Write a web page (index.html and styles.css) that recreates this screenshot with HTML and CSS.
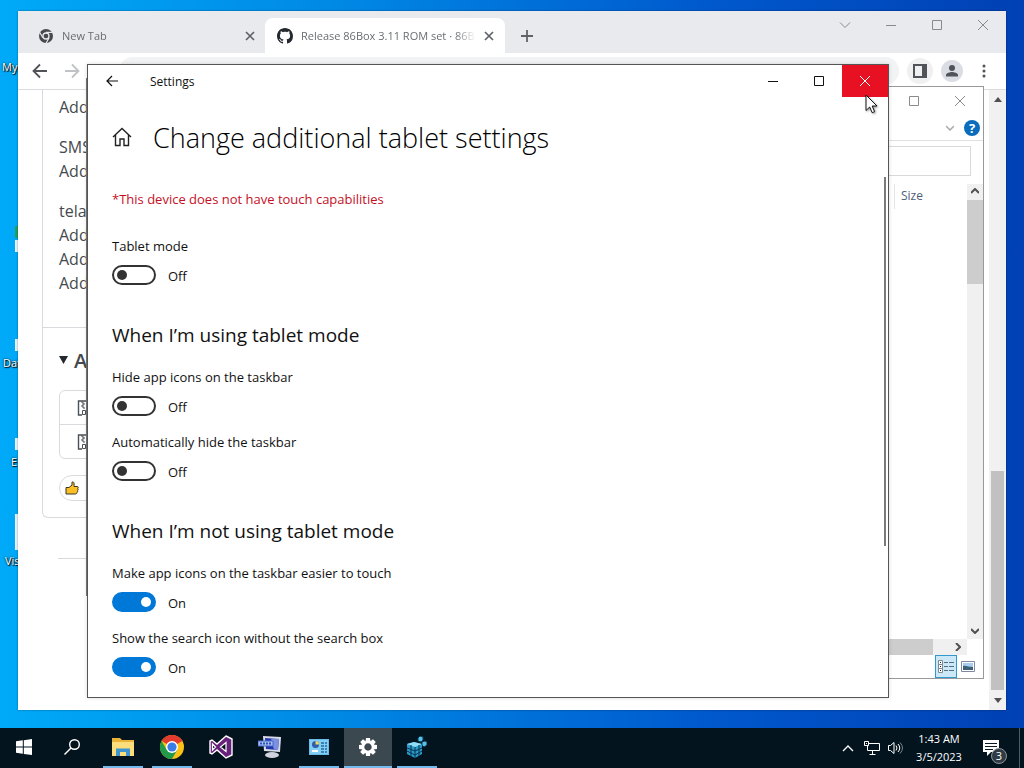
FILE: index.html
```html
<!DOCTYPE html>
<html lang="en">

<head>
    <meta charset="UTF-8">
    <meta name="viewport" content="width=device-width, initial-scale=1.0">
    <title>Settings</title>
    <link rel="stylesheet" href="styles.css">
</head>

<body>
    <main class="desktop">
        <div class="shortcut shortcut-my">My</div>
        <div class="shortcut-icon icon-green"></div>
        <div class="shortcut-icon icon-data"></div>
        <div class="shortcut shortcut-data">Dat</div>
        <div class="shortcut-icon icon-e"></div>
        <div class="shortcut shortcut-e">E</div>
        <div class="shortcut-icon icon-vis"></div>
        <div class="shortcut shortcut-vis">Vis</div>

        <!-- Browser -->
        <section class="window browser">
            <div class="tab-strip">
                <div class="tab">
                    <svg width="16" height="16" viewBox="0 0 16 16">
                        <circle cx="8" cy="8" r="7" fill="#45484c" />
                        <circle cx="8" cy="8" r="3" fill="#45484c" stroke="#e8eaed" stroke-width="1.3" />
                        <path d="M8 4.4h6.6M4.9 9.8L1.6 4.2M11.1 9.8l-3.2 5.7" stroke="#e8eaed" stroke-width="1.2" />
                    </svg>
                    <span class="tab-title">New Tab</span>
                    <button class="tab-close" aria-label="Close tab"><svg width="10" height="10" viewBox="0 0 10 10"><path d="M1 1l8 8M9 1l-8 8" stroke="#5f6368" stroke-width="1.7" /></svg></button>
                </div>
                <div class="tab tab-active">
                    <svg width="16" height="16" viewBox="0 0 16 16"><path fill="#24292f" d="M8 0C3.58 0 0 3.58 0 8c0 3.54 2.29 6.53 5.47 7.59.4.07.55-.17.55-.38 0-.19-.01-.82-.01-1.49-2.01.37-2.53-.49-2.69-.94-.09-.23-.48-.94-.82-1.13-.28-.15-.68-.52-.01-.53.63-.01 1.08.58 1.23.82.72 1.21 1.87.87 2.33.66.07-.52.28-.87.51-1.07-1.78-.2-3.64-.89-3.64-3.95 0-.87.31-1.59.82-2.15-.08-.2-.36-1.02.08-2.12 0 0 .67-.21 2.2.82.64-.18 1.32-.27 2-.27s1.36.09 2 .27c1.53-1.04 2.2-.82 2.2-.82.44 1.1.16 1.92.08 2.12.51.56.82 1.27.82 2.15 0 3.07-1.87 3.75-3.65 3.95.29.25.54.73.54 1.48 0 1.07-.01 1.93-.01 2.2 0 .21.15.46.55.38A8.01 8.01 0 0016 8c0-4.42-3.58-8-8-8z" /></svg>
                    <span class="tab-title">Release 86Box 3.11 ROM set · 86B</span>
                    <button class="tab-close" aria-label="Close tab"><svg width="10" height="10" viewBox="0 0 10 10"><path d="M1 1l8 8M9 1l-8 8" stroke="#5f6368" stroke-width="1.7" /></svg></button>
                </div>
                <button class="new-tab" aria-label="New tab"><svg width="12" height="12" viewBox="0 0 12 12"><path d="M6 0v12M0 6h12" stroke="#5f6368" stroke-width="1.8" /></svg></button>
                <div class="controls controls-dim">
                    <button aria-label="Search tabs"><svg width="12" height="12" viewBox="0 0 12 12"><path d="M1 3.5l5 5 5-5" /></svg></button>
                    <button aria-label="Minimize"><svg width="12" height="12" viewBox="0 0 12 12"><path d="M1 6.5h10" /></svg></button>
                    <button aria-label="Maximize"><svg width="12" height="12" viewBox="0 0 12 12"><path d="M1.500 1.500h9v9h-9z" /></svg></button>
                    <button aria-label="Close"><svg width="12" height="12" viewBox="0 0 12 12"><path d="M1 1l10 10M11 1L1 11" /></svg></button>
                </div>
            </div>
            <div class="toolbar">
                <button aria-label="Back"><svg width="16" height="16" viewBox="0 0 16 16"><path d="M15 8H2M8 1.500L1.500 8 8 14.500" fill="none" stroke="#505357" stroke-width="1.800" /></svg></button>
                <button aria-label="Forward"><svg width="16" height="16" viewBox="0 0 16 16"><path d="M1 8h13M8 1.500L14.500 8 8 14.500" fill="none" stroke="#c0c2c5" stroke-width="1.800" /></svg></button>
                <input class="omnibox" type="text" aria-label="Address">
                <button class="side-panel" aria-label="Side panel"><svg width="14" height="14" viewBox="0 0 14 14"><path d="M1 1h12v12H1z" fill="none" stroke="#505357" stroke-width="2" /><path d="M9 1h4v12H9z" fill="#505357" /></svg></button>
                <button class="avatar" aria-label="Profile"><svg width="14" height="14" viewBox="0 0 14 14" fill="#505357"><circle cx="7" cy="4" r="3" /><path d="M1 12.500V11c0-2 4-3 6-3s6 1 6 3v1.500z" /></svg></button>
                <button class="menu" aria-label="Menu"><svg width="4" height="14" viewBox="0 0 4 14" fill="#505357"><circle cx="2" cy="2" r="1.500" /><circle cx="2" cy="7" r="1.500" /><circle cx="2" cy="12" r="1.500" /></svg></button>
            </div>
            <div class="page">
                <div class="page-body">
                    <article class="release">
                        <div class="release-notes">
                            <p>Add</p>
                            <p>SMS<br>Add</p>
                            <p>tela<br>Add<br>Add<br>Add</p>
                        </div>
                        <div class="release-assets">
                            <h3><svg width="9" height="8" viewBox="0 0 9 8"><path d="M0 0h9L4.500 8z" fill="#24292f" /></svg>Assets</h3>
                            <ul class="asset-list">
                                <li><svg width="14" height="16" viewBox="0 0 14 16" fill="none" stroke="#4a5057"><path d="M5 15H1.500V1h11v14H9" stroke-width="1.400" /><path d="M5 1v2h2v2H5v2h2v2" /><path d="M5.500 10.500h3v4h-3z" /></svg></li>
                                <li><svg width="14" height="16" viewBox="0 0 14 16" fill="none" stroke="#4a5057"><path d="M5 15H1.500V1h11v14H9" stroke-width="1.400" /><path d="M5 1v2h2v2H5v2h2v2" /><path d="M5.500 10.500h3v4h-3z" /></svg></li>
                            </ul>
                            <button class="reaction" aria-label="Thumbs up"><svg width="14" height="14" viewBox="0 0 14 14"><path d="M1 6.500h3L7 4V1c1.500-.5 2.500.5 2 4.500h3c1.500 0 1.500 1.500.8 2 .6.800.4 1.600-.2 2 .3.900 0 1.500-.6 1.800 0 1-.5 1.700-1.500 1.700H1z" fill="#fbbf24" stroke="#3a3428" /></svg></button>
                        </div>
                    </article>
                    <hr class="page-rule">
                </div>
                <div class="page-scroll">
                    <svg width="8" height="5" viewBox="0 0 8 5"><path d="M0 5l4-5 4 5z" fill="#505050" /></svg>
                    <div class="page-thumb"></div>
                    <svg width="8" height="5" viewBox="0 0 8 5"><path d="M0 0l4 5 4-5z" fill="#505050" /></svg>
                </div>
            </div>
        </section>

        <section class="window back-window"></section>

        <!-- File Explorer -->
        <section class="window explorer">
            <div class="controls controls-dim">
                <button aria-label="Maximize"><svg width="12" height="12" viewBox="0 0 12 12"><path d="M1.500 1.500h9v9h-9z" /></svg></button>
                <button aria-label="Close"><svg width="12" height="12" viewBox="0 0 12 12"><path d="M1 1l10 10M11 1L1 11" /></svg></button>
            </div>
            <div class="ribbon">
                <button aria-label="Expand ribbon"><svg width="8" height="6" viewBox="0 0 8 6"><path d="M0 1l4 4 4-4" fill="none" stroke="#a8a8a8" stroke-width="1.500" /></svg></button>
                <button class="help" aria-label="Help">?</button>
            </div>
            <div class="explorer-search"><input type="text" aria-label="Search"></div>
            <div class="file-list">
                <div class="column-head">Size</div>
                <div class="file-scroll">
                    <svg width="8" height="6" viewBox="0 0 8 6"><path d="M0 5l4-4 4 4" fill="none" stroke="#505050" stroke-width="2" /></svg>
                    <div class="file-thumb"></div>
                    <svg width="8" height="6" viewBox="0 0 8 6"><path d="M0 1l4 4 4-4" fill="none" stroke="#505050" stroke-width="2" /></svg>
                </div>
            </div>
            <div class="bottom-scroll">
                <div class="bottom-thumb"></div>
                <svg width="6" height="8" viewBox="0 0 6 8"><path d="M1 0l4 4-4 4" fill="none" stroke="#505050" stroke-width="2" /></svg>
            </div>
            <div class="view-bar">
                <button class="view-active" aria-label="Details"><svg width="16" height="14" viewBox="0 0 16 14"><path d="M.5.5h4v4h-4zM.5 4.500h4v4h-4zM.5 8.500h4v4h-4z" fill="#fff" stroke="#7d8b91" /><path d="M2 2.500h1M2 6.500h1M2 10.500h1" stroke="#222" /><path d="M6 2.500h4m1 0h5M6 6.500h4m1 0h5M6 10.500h4m1 0h5" stroke="#52707e" /></svg></button>
                <button aria-label="Large icons"><svg width="14" height="11" viewBox="0 0 14 11"><path d="M.5.5h13v10H.5z" fill="#fff" stroke="#8088a0" /><path d="M2 2h10v7H2z" fill="#a9cdf0" /><path d="M2 5c3-1 5 1 10 1v3H2z" fill="#3d6078" /></svg></button>
            </div>
        </section>

        <!-- Settings -->
        <section class="window settings">
            <header class="title-bar">
                <button class="back" aria-label="Back"><svg width="12" height="12" viewBox="0 0 12 12"><path d="M12 6H1M6 1L1 6l5 5" fill="none" stroke="#111" stroke-width="1.200" /></svg></button>
                <span class="title-text">Settings</span>
                <div class="controls">
                    <button aria-label="Minimize"><svg width="12" height="12" viewBox="0 0 12 12"><path d="M1 6.500h10" /></svg></button>
                    <button aria-label="Maximize"><svg width="12" height="12" viewBox="0 0 12 12"><path d="M1.500 1.500h9v9h-9z" /></svg></button>
                    <button class="close" aria-label="Close"><svg width="12" height="12" viewBox="0 0 12 12"><path d="M1 1l10 10M11 1L1 11" /></svg></button>
                </div>
            </header>
            <div class="settings-head">
                <button aria-label="Home"><svg width="20" height="20" viewBox="0 0 20 20"><path d="M1 10l9-8.500L19 10M3.500 8v10.500H8V12h4v6.500h4.500V8" fill="none" stroke="#222" stroke-width="1.400" /></svg></button>
                <h1>Change additional tablet settings</h1>
            </div>
            <div class="settings-body">
                <p class="warning">*This device does not have touch capabilities</p>
                <div class="setting">
                    <label for="tablet">Tablet mode</label>
                    <div class="switch"><input type="checkbox" id="tablet"><span>Off</span></div>
                </div>

                <h2>When I’m using tablet mode</h2>
                <div class="setting">
                    <label for="hide-icons">Hide app icons on the taskbar</label>
                    <div class="switch"><input type="checkbox" id="hide-icons"><span>Off</span></div>
                </div>
                <div class="setting">
                    <label for="auto-hide">Automatically hide the taskbar</label>
                    <div class="switch"><input type="checkbox" id="auto-hide"><span>Off</span></div>
                </div>

                <h2>When I’m not using tablet mode</h2>
                <div class="setting">
                    <label for="touch-icons">Make app icons on the taskbar easier to touch</label>
                    <div class="switch"><input type="checkbox" id="touch-icons" checked><span>On</span></div>
                </div>
                <div class="setting">
                    <label for="search-icon">Show the search icon without the search box</label>
                    <div class="switch"><input type="checkbox" id="search-icon" checked><span>On</span></div>
                </div>
            </div>
            <div class="settings-thumb"></div>
        </section>

        <svg class="cursor" width="14" height="20" viewBox="0 0 14 20"><path d="M1 1v15.500l3.700-3.500 2.500 5.700 2.400-1L7.200 12H12z" fill="#fff" stroke="#111" /></svg>
    </main>

    <nav class="taskbar">
        <button class="task" aria-label="Start"><svg width="16" height="16" viewBox="0 0 16 16" fill="#fff"><path d="M0 2.300L6.800 1.300v6.300H0zM7.800 1.200L16 0v7.600H7.800zM0 8.500h6.800v6.300L0 13.800zM7.800 8.500H16V16l-8.200-1.100z" /></svg></button>
        <button class="task" aria-label="Search"><svg width="16" height="16" viewBox="0 0 16 16" fill="none" stroke="#fff" stroke-width="1.400"><circle cx="10.500" cy="5.500" r="4.800" /><path d="M7 9L.5 15.500" /></svg></button>
        <div class="pinned">
            <button class="task task-open" aria-label="File Explorer"><svg width="22" height="18" viewBox="0 0 22 18"><path d="M0 0h8l2 2h12v16H0z" fill="#e9b33a" /><path d="M0 4h22v14H0z" fill="#fbdd7c" /><path d="M4 18v-7.500h14V18h-4v-4H8v4z" fill="#3f95d0" /></svg></button>
            <button class="task task-open" aria-label="Chrome"><svg width="24" height="24" viewBox="0 0 24 24"><circle cx="12" cy="12" r="12" fill="#fbc116" /><path d="M12 12L1.600 6A12 12 0 0122.400 6z" fill="#e33b2e" /><path d="M1.600 6A12 12 0 0012 24l5.200-9L12 12 6.800 15z" fill="#229a4c" /><circle cx="12" cy="12" r="6" fill="#fff" /><circle cx="12" cy="12" r="4.600" fill="#3b7de8" /></svg></button>
            <button class="task" aria-label="Visual Studio"><svg width="24" height="24" viewBox="0 0 24 24"><path d="M17 1l6 3v16l-6 3-9-8-5 4-2-1V6l2-1 5 4z" fill="#68217a" stroke="#fff" stroke-width="1.400" /><path d="M17 7.500v9L11.500 12zM3.500 9v6l3-3z" fill="#03141f" stroke="#fff" stroke-width="1.200" /></svg></button>
            <button class="task" aria-label="Remote session"><svg width="24" height="24" viewBox="0 0 24 24"><path d="M5 1l18 1-1 15-16-1z" fill="#d9dbe6" /><path d="M7 3l14 1-1 11-12-1z" fill="#2438ad" /><path d="M13 4l8 0-1 11-4-.5z" fill="#7f8fe0" /><path d="M0 6h15v5H0z" fill="#aebeee" stroke="#4169cf" /><path d="M2 8.500h12" stroke="#2854b7" stroke-width="2" stroke-dasharray="2 1" /><ellipse cx="14" cy="20" rx="7" ry="3" fill="#d0d2dd" /></svg></button>
            <button class="task task-open" aria-label="Control Panel"><svg width="20" height="16" viewBox="0 0 20 16"><path d="M0 0h20v16H0z" fill="#69bce9" /><path d="M1 1h18v14H1z" fill="#82cef4" /><circle cx="6.500" cy="5.500" r="3.500" fill="#305caa" /><path d="M6.500 5.500V2a3.500 3.500 0 013.500 3.500z" fill="#f1d858" /><path d="M12 4h6M12 7h6M12 10h6M12 13h6" stroke="#256b9d" stroke-width="1.500" stroke-dasharray="3 1" /><path d="M3 12h6" stroke="#fff" stroke-width="2" /></svg></button>
            <button class="task task-open task-active" aria-label="Settings"><svg width="18" height="18" viewBox="-9 -9 18 18"><g fill="#fff"><path id="tooth" d="M-2-9h4l.5 4h-5z" /><use href="#tooth" transform="rotate(45)" /><use href="#tooth" transform="rotate(90)" /><use href="#tooth" transform="rotate(135)" /><use href="#tooth" transform="rotate(180)" /><use href="#tooth" transform="rotate(225)" /><use href="#tooth" transform="rotate(270)" /><use href="#tooth" transform="rotate(315)" /></g><circle r="5" fill="#3c4850" stroke="#fff" stroke-width="2.600" /></svg></button>
            <button class="task task-open" aria-label="Registry Editor"><svg width="20" height="22" viewBox="0 0 20 22"><path d="M0 8l7-2 8 2v10l-7 4-8-4z" fill="#2c9ac8" /><path d="M0 8l7-2 8 2-7 3z" fill="#91def4" /><path d="M8 11v11M4 9v11M12 9v11M0 12l8 3 7-3M0 15l8 4 7-4" stroke="#07334f" fill="none" /><path d="M11 2l2-2 3 1v3l-2 2-3-1zM15 6l3-1 2 1v3l-3 2-2-2z" fill="#59c2e7" stroke="#0b3c59" /></svg></button>
        </div>
        <div class="tray">
            <button aria-label="Hidden icons"><svg width="12" height="8" viewBox="0 0 12 8"><path d="M1 7l5-5 5 5" fill="none" stroke="#fff" stroke-width="1.400" /></svg></button>
            <button aria-label="Network"><svg width="16" height="14" viewBox="0 0 16 14" fill="none" stroke="#fff"><path d="M5 2.500h10.500v7H3.500V5M8.500 10v3M5.500 13.500h6" /><path d="M.5.500h4v4h-4z" fill="#03141f" /><path d="M2 2.500h1" /></svg></button>
            <button aria-label="Volume"><svg width="16" height="14" viewBox="0 0 16 14" fill="none" stroke="#fff"><path d="M.5 4.500h2L6 1.500v11L2.500 9.500h-2z" /><path d="M8 4.500q2 2.500 0 5M10 3q3.500 4 0 8" /><path d="M12 1.500q5 5.500 0 11" stroke="#79858d" /></svg></button>
            <button class="clock">1:43 AM<br>3/5/2023</button>
            <button class="notice" aria-label="Notifications"><svg width="16" height="16" viewBox="0 0 16 16"><path d="M0 0h16v12H8l-4 4v-4H0z" fill="#fff" /><path d="M2 3.500h12M2 6.500h12M2 9.500h8" stroke="#0a1824" /></svg><span class="badge">3</span></button>
        </div>
    </nav>

    <script>
        document.querySelectorAll(".switch input").forEach(function (box) {
            box.onchange = function () {
                box.nextElementSibling.textContent = box.checked ? "On" : "Off";
            };
        });
    </script>
</body>

</html>
```

FILE: styles.css
```css
:root {
    --accent: #0078d7;
    --border-color: #d8dadd;
    --taskbar-color: #03141f;
}

* {
    margin: 0;
    padding: 0;
    box-sizing: border-box;
}

body {
    display: flex;
    flex-direction: column;
    height: 100vh;
    overflow: hidden;
    font-family: "Open Sans", "Noto Sans", sans-serif;
    font-size: 13px;
    color: #111;
}

button {
    display: flex;
    align-items: center;
    justify-content: center;
    border: none;
    background: none;
    font: inherit;
    color: inherit;
}

svg {
    display: block;
    flex-shrink: 0;
}

.desktop {
    position: relative;
    flex: 1;
    overflow: hidden;
    background: linear-gradient(90deg, #00aaf8 0%, #0086e4 35%, #0058cc 70%, #0040b4 100%);
}

.shortcut {
    position: absolute;
    font-size: 11px;
    line-height: 16px;
    color: #fff;
    text-shadow: 1px 1px 1px #000, 0 0 2px #000;
}

.shortcut-my { left: 2px; top: 59px; }
.shortcut-data { left: 3px; top: 355px; }
.shortcut-e { left: 11px; top: 454px; }
.shortcut-vis { left: 5px; top: 553px; }

.shortcut-icon {
    position: absolute;
    left: 15px;
    width: 8px;
    height: 12px;
    background: #e8f4fb;
}

.icon-green { top: 240px; box-shadow: 0 -14px 0 #22a060; }
.icon-data { top: 339px; }
.icon-e { top: 438px; }
.icon-vis { top: 514px; height: 36px; }

.window {
    position: absolute;
    display: flex;
    flex-direction: column;
    background: #fff;
}

.controls {
    display: flex;
    margin-left: auto;
}

.controls button {
    width: 46px;
    height: 28px;
}

.controls svg {
    fill: none;
    stroke: #111;
}

.controls-dim svg {
    stroke: #8a8a8a;
}

/* Browser */
.browser {
    left: 18px;
    top: 11px;
    right: 18px;
    bottom: 18px;
    box-shadow: 0 0 2px rgba(0, 0, 0, .4);
}

.tab-strip {
    display: flex;
    height: 42px;
    background: #e8eaed;
}

.tab {
    display: flex;
    align-items: center;
    gap: 8px;
    width: 240px;
    margin-top: 7px;
    padding: 0 11px 0 12px;
    border-radius: 8px 8px 0 0;
}

.tab:first-child {
    width: 247px;
    padding-left: 20px;
    padding-right: 10px;
}

.tab-active {
    background: #fff;
}

.tab-title {
    flex: 1;
    overflow: hidden;
    white-space: nowrap;
    font-size: 11px;
    color: #6a6d70;
    -webkit-mask-image: linear-gradient(90deg, #000 88%, transparent);
    mask-image: linear-gradient(90deg, #000 88%, transparent);
}

.new-tab {
    width: 44px;
    margin-top: 7px;
}

.toolbar {
    display: flex;
    align-items: center;
    gap: 10px;
    height: 36px;
    padding: 0 14px 0 11px;
}

.toolbar button {
    width: 22px;
    height: 22px;
}

.omnibox {
    flex: 1;
    height: 28px;
    margin-left: 26px;
    border: none;
    border-radius: 14px;
    background: #f1f3f4;
}

.toolbar .side-panel,
.toolbar .avatar {
    border-radius: 50%;
    background: #dadde3;
}

.toolbar .side-panel {
    background: #f0f0f0;
    box-shadow: 0 0 0 2px #f0f0f0;
}

.toolbar .menu {
    width: 16px;
    margin-left: 3px;
}

.page {
    display: flex;
    flex: 1;
    min-height: 0;
    border-top: 1px solid #dadce0;
}

.page-body {
    flex: 1;
    padding: 0 24px;
}

.release {
    border: 1px solid var(--border-color);
    border-top: none;
    border-radius: 0 0 6px 6px;
    color: #45494e;
}

.release-notes {
    padding: 5px 16px 16px;
    border-bottom: 1px solid var(--border-color);
    font-size: 16px;
    line-height: 24px;
}

.release-notes p {
    margin-bottom: 16px;
}

.release-assets {
    padding: 16px;
}

.release-assets h3 {
    display: flex;
    align-items: center;
    gap: 6px;
    height: 32px;
    margin-bottom: 14px;
    font-size: 20px;
    font-weight: 600;
}

.asset-list {
    border: 1px solid var(--border-color);
    border-radius: 6px;
    list-style: none;
}

.asset-list li {
    display: flex;
    align-items: center;
    height: 33px;
    padding-left: 17px;
}

.asset-list li + li {
    height: 34px;
    border-top: 1px solid var(--border-color);
}

.reaction {
    width: 52px;
    height: 26px;
    margin-top: 16px;
    padding-right: 26px;
    border: 1px solid var(--border-color);
    border-radius: 13px;
}

.page-rule {
    margin: 40px 16px 0;
    border: none;
    border-top: 1px solid var(--border-color);
}

.page-scroll {
    display: flex;
    flex-direction: column;
    align-items: center;
    gap: 8px;
    width: 17px;
    padding: 7px 0;
    background: #f1f1f1;
}

.page-thumb {
    width: 13px;
    height: 219px;
    margin-top: auto;
    background: #c1c1c1;
}

.back-window {
    left: 86px;
    top: 78px;
    bottom: 132px;
    width: 200px;
    border: 1px solid #777;
}

/* File Explorer */
.explorer {
    left: 300px;
    top: 86px;
    right: 40px;
    bottom: 49px;
    border: 1px solid #999;
}

.ribbon {
    display: flex;
    align-items: center;
    justify-content: flex-end;
    gap: 10px;
    height: 26px;
    padding-right: 3px;
    border-bottom: 1px solid #e0e0e0;
}

.ribbon .help {
    width: 16px;
    height: 16px;
    border-radius: 50%;
    background: #0b6cbd;
    color: #fff;
    font-weight: 700;
}

.explorer-search {
    display: flex;
    padding: 5px 12px 8px;
}

.explorer-search input {
    flex: 1;
    height: 30px;
    border: 1px solid #d9d9d9;
}

.file-list {
    display: flex;
    flex: 1;
    justify-content: flex-end;
}

.column-head {
    width: 73px;
    height: 25px;
    padding-left: 6px;
    border-left: 1px solid #e5e5e5;
    font-size: 12px;
    line-height: 24px;
    color: #4c607a;
}

.file-scroll {
    display: flex;
    flex-direction: column;
    align-items: center;
    gap: 6px;
    width: 16px;
    padding: 4px 0 5px;
    background: #f0f0f0;
}

.file-thumb {
    width: 100%;
    height: 84px;
    margin-bottom: auto;
    background: #cdcdcd;
}

.bottom-scroll {
    display: flex;
    align-items: center;
    gap: 22px;
    height: 16px;
    margin-right: 16px;
    padding-right: 6px;
    background: #f0f0f0;
}

.bottom-thumb {
    flex: 1;
    height: 100%;
    background: #cdcdcd;
}

.view-bar {
    display: flex;
    justify-content: flex-end;
    height: 23px;
    padding-right: 4px;
}

.view-bar button {
    width: 22px;
}

.view-bar .view-active {
    border: 1px solid #3399cc;
    background: #cce8f6;
}

/* Settings */
.settings {
    left: 87px;
    top: 64px;
    right: 135px;
    bottom: 30px;
    border: 1px solid #555;
    box-shadow: 0 0 4px rgba(0, 0, 0, .15);
}

.title-bar {
    display: flex;
    align-items: center;
    height: 32px;
}

.title-bar .back {
    width: 48px;
    height: 32px;
}

.title-text {
    padding-left: 14px;
    font-size: 12px;
}

.title-bar .controls button {
    height: 32px;
}

.title-bar .close {
    background: #e81123;
}

.title-bar .close svg {
    stroke: #fff;
}

.settings-head {
    display: flex;
    align-items: center;
    gap: 21px;
    height: 40px;
    margin-top: 20px;
    padding-left: 24px;
}

h1 {
    font-size: 27px;
    font-weight: 300;
    color: #000;
}

.settings-body {
    padding: 32px 24px 20px;
}

.warning {
    margin-bottom: 27px;
    line-height: 20px;
    color: #c50f1f;
}

h2 {
    margin: 36px 0 18px;
    font-size: 19px;
    font-weight: 400;
    line-height: 28px;
}

.setting + .setting {
    margin-top: 16px;
}

.setting label {
    display: block;
    margin-bottom: 9px;
    line-height: 20px;
}

.switch {
    display: flex;
    align-items: center;
    gap: 12px;
    height: 20px;
    line-height: 20px;
}

.switch span {
    padding-top: 2px;
}

.switch input {
    appearance: none;
    display: flex;
    align-items: center;
    width: 44px;
    height: 20px;
    padding: 0 3px;
    border: 2px solid #333;
    border-radius: 10px;
}

.switch input::before {
    content: "";
    width: 10px;
    height: 10px;
    border-radius: 50%;
    background: #333;
}

.switch input:checked {
    justify-content: flex-end;
    border-color: var(--accent);
    background: var(--accent);
}

.switch input:checked::before {
    background: #fff;
}

.settings-thumb {
    position: absolute;
    top: 112px;
    right: 2px;
    bottom: 151px;
    width: 2px;
    background: #7a7a7a;
}

.cursor {
    position: absolute;
    left: 865px;
    top: 94px;
    filter: drop-shadow(1px 1px 1px rgba(0, 0, 0, .4));
}

/* Taskbar */
.taskbar {
    display: flex;
    height: 40px;
    background: var(--taskbar-color);
    color: #fff;
}

.task {
    width: 48px;
    border-bottom: 2px solid transparent;
}

.pinned {
    display: flex;
    gap: 1px;
    margin-left: 3px;
}

.task-open {
    background: linear-gradient(#76b9ed, #76b9ed) center bottom / 40px 2px no-repeat border-box;
}

.task-active {
    border-bottom-color: #76b9ed;
    background: #3c4850;
}

.tray {
    display: flex;
    align-items: center;
    gap: 8px;
    margin-left: auto;
    padding-right: 4px;
}

.tray button {
    min-width: 16px;
    height: 40px;
}

.tray .clock {
    width: 54px;
    margin-right: 5px;
    font-size: 11px;
    line-height: 18px;
    text-align: center;
}

.tray .notice {
    position: relative;
    width: 41px;
    padding-right: 16px;
    border-right: 1px solid #4a5a66;
}

.badge {
    position: absolute;
    right: 12px;
    bottom: 4px;
    width: 16px;
    height: 16px;
    border: 1px solid #8b949b;
    border-radius: 50%;
    background: #303b44;
    font-size: 11px;
    line-height: 14px;
}
```
